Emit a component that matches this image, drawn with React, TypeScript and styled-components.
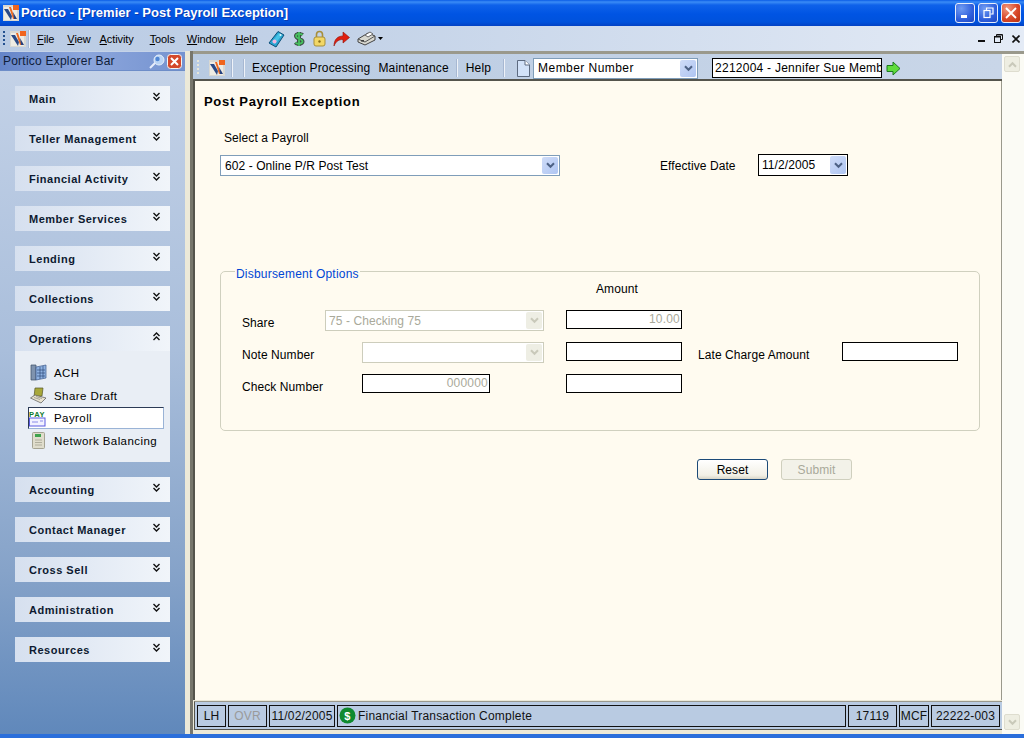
import React from "react";
import styled, { createGlobalStyle } from "styled-components";

const Global = createGlobalStyle`
  html, body { margin: 0; padding: 0; background: #2a6edb; }
  #root { width: 1024px; height: 738px; overflow: hidden; }
  * { box-sizing: border-box; }
`;

const Win = styled.div`
  width: 1024px; height: 738px; display: flex; flex-direction: column; overflow: hidden;
  font-family: "Liberation Sans", Arial, sans-serif; font-size: 12px; color: #000;
  background: #2a6edb;
`;
const TitleBar = styled.div`
  height: 26px; flex: none; display: flex; align-items: center; padding: 0 3px 0 3px;
  background: linear-gradient(#0a5ce6 0, #3b8cf6 2px, #0f62ea 5px, #0054e3 14px, #0052dc 22px, #0342c4 26px);
`;
const TitleText = styled.div`
  margin-left: 2px; color: #fff; font-weight: 700; font-size: 13px; letter-spacing: .03px; flex: 1;
  text-shadow: 1px 1px 0 #0a3bb0; line-height: 26px;
`;
const WinButtons = styled.div`display: flex; gap: 3px;`;
const WinBtn = styled.div<{ $red?: boolean }>`
  height: 20px; width: 20px; border: 1px solid #e8eefb; border-radius: 3px;
  display: flex; align-items: center; justify-content: center;
  background: ${(p) => (p.$red
    ? "radial-gradient(circle at 30% 25%, #f09a80, #d9482a 55%, #b8300f)"
    : "radial-gradient(circle at 30% 25%, #6f9bf2, #2f5fdc 60%, #1f47c0)")};
`;

const MenuBar = styled.div`
  height: 25px; flex: none; display: flex; align-items: center; padding: 0 4px 0 3px;
  background: linear-gradient(90deg, #b9cbe4 0, #c4d3e8 35%, #e4ebf6 100%);
`;
const Grip = styled.div<{ $light?: boolean; $r: number }>`
  width: 2px; height: 16px; flex: none; margin-right: ${(p) => p.$r}px;
  background: repeating-linear-gradient(${(p) => (p.$light ? "#e8e6d8" : "#23508f")} 0 2px, transparent 2px 4px);
`;
const MenuItem = styled.span<{ $r: number }>`
  font-size: 11px; letter-spacing: -.1px; margin-right: ${(p) => p.$r}px;
  &::first-letter { text-decoration: underline; }
`;
const Sep = styled.div<{ $l?: number; $r?: number }>`
  width: 1px; height: 18px; flex: none; background: #eef2f8; box-shadow: -1px 0 0 #a7b8d2;
  margin-left: ${(p) => p.$l ?? 0}px; margin-right: ${(p) => p.$r ?? 0}px;
`;
const MenuIcons = styled.div`display: flex; align-items: center; gap: 7px;`;
const MenuDrop = styled.span`display: flex; margin-left: -5px;`;
const MdiButtons = styled.div`margin-left: auto; display: flex; align-items: center; gap: 9px;`;

const Body = styled.div`flex: 1; display: flex; min-height: 0;`;
const Side = styled.aside`
  width: 185px; flex: none; display: flex; flex-direction: column;
  background: linear-gradient(#c5d3e8 0, #a9bedb 300px, #86a3c9 520px, #6088bb 683px);
`;
const SideHead = styled.div`
  height: 19px; flex: none; display: flex; align-items: center; padding: 0 3px 0 3px; margin-top: 1px; gap: 2px;
  background: linear-gradient(90deg, #6484c8, #8ca6dc 45%, #7593d0);
  border-bottom: 1px solid #6d8dc8; font-size: 12px; letter-spacing: .22px; color: #10203a;
`;
const SideTitle = styled.span`flex: 1;`;
const SideScroll = styled.div`flex: 1; padding: 15px 15px 0; display: flex; flex-direction: column; gap: 15px;`;
const Group = styled.section``;
const GroupHead = styled.div`
  height: 25px; display: flex; align-items: center; justify-content: space-between; padding: 0 10px 0 14px;
  background: linear-gradient(90deg, #d6e0ef, #f1f5fa);
  font-size: 11px; font-weight: 700; letter-spacing: .52px; color: #0d1a30;
`;
const ChevWrap = styled.span`display: flex; margin-top: -4px;`;
const GroupBody = styled.div`
  height: 111px; background: #e9eef5; padding: 10px 6px 0 13px; display: flex; flex-direction: column;
`;
const GroupItem = styled.div<{ $active?: boolean }>`
  height: ${(p) => (p.$active ? "22px" : "23px")}; display: flex; align-items: center; flex: none;
  gap: ${(p) => (p.$active ? "8px" : "7px")}; font-size: 11.5px; letter-spacing: .42px;
  padding-left: ${(p) => (p.$active ? "0" : "2px")};
  ${(p) => p.$active && "background:#fff;border:1px solid #9ab3d6;border-top-color:#2c3a55;border-left-color:#2c3a55;"}
`;
const IconSlot = styled.span`width: 17px; flex: none; display: flex; justify-content: center; align-items: center;`;

const Splitter = styled.div`
  width: 8px; flex: none; background: #ece9d8;
  border-right: 3px solid #77766c;
`;
const Main = styled.main`
  flex: 1; display: flex; background: #ece9d8; min-width: 0; min-height: 0;
  border-top: 3px solid #9a998c;
`;
const MainCol = styled.div`width: 809px; flex: none; display: flex; flex-direction: column;`;
const ToolBar = styled.div`
  height: 27px; flex: none; display: flex; align-items: center; padding: 3px 0 0 4px;
  background: linear-gradient(90deg, #b9cbe2, #c3d2e6 60%, #c9d6e8);
  border-bottom: 2px solid #55544c; font-size: 12px; letter-spacing: .15px;
`;
const ToolLogo = styled.span`display: flex; margin-left: 8px;`;
const ToolText = styled.span<{ $l?: number }>`
  margin-left: ${(p) => p.$l ?? 0}px; white-space: nowrap;
`;
const MemberCombo = styled.div`
  width: 165px; height: 21px; margin-left: 3px; background: #fff; border: 1px solid #7f9db9;
  display: flex; align-items: center; justify-content: space-between; padding: 1px 1px 1px 4px; letter-spacing: .45px;
`;
const ArrowBtn = styled.span<{ $off?: boolean }>`
  width: 16px; align-self: stretch; flex: none; display: flex; align-items: center; justify-content: center;
  background: ${(p) => (p.$off ? "#eeeee4" : "linear-gradient(135deg, #cfdcf8, #afc5f2)")};
  border-radius: 2px;
`;
const MemberInput = styled.div`
  width: 170px; height: 20px; margin: 0 4px 0 14px; background: #fff; border: 1px solid #000;
  display: flex; align-items: center; padding-left: 2px; overflow: hidden; white-space: nowrap; letter-spacing: .25px;
`;
const Form = styled.div`
  flex: 1; background: #fffbf0; padding: 13px 0 0 9px; letter-spacing: .08px; font-size: 12px;
  border-left: 2px solid #55544c; border-right: 1px solid #9a998c; min-height: 0;
`;
const PageTitle = styled.h1`margin: 0; font-size: 13px; line-height: 15px; letter-spacing: .7px; font-weight: 700;`;
const FormInner = styled.div`display: flex; flex-direction: column; padding-left: 16px;`;
const TopRow = styled.div`display: flex; margin-top: 22px;`;
const PayrollCol = styled.div`width: 440px; display: flex; flex-direction: column;`;
const PayrollLabel = styled.div`margin-left: 4px; height: 14px; line-height: 14px; margin-bottom: 10px;`;
const Select = styled.div<{ $w: number; $off?: boolean; $h?: number }>`
  width: ${(p) => p.$w}px; height: ${(p) => p.$h ?? 21}px; flex: none; background: #fff;
  border: 1px solid ${(p) => (p.$off ? "#cdcdbc" : "#7f9db9")};
  display: flex; align-items: center; justify-content: space-between; padding: 1px 1px 1px 4px;
  color: ${(p) => (p.$off ? "#a9a99a" : "#000")};
`;
const DateCol = styled.div`display: flex; align-items: center; margin-top: 23px; height: 22px;`;
const DateLabel = styled.span`width: 98px; padding-top: 2px;`;
const DateBox = styled(Select)`border-color: #000; padding-left: 3px;`;
const Field = styled.fieldset`
  margin: 85px 0 0 0; width: 760px; height: 170px; border: 1px solid #d0d0bf; border-radius: 5px; padding: 0 0 0 21px;
`;
const Legend = styled.legend`
  margin-left: -7px; padding: 6px 1px 0; color: #0046d5; font-size: 12px; line-height: 14px; letter-spacing: .2px;
`;
const AmountHead = styled.div`margin: 1px 0 0 354px; line-height: 14px; height: 14px;`;
const Grid = styled.div`
  display: grid; margin-top: 14px; align-items: start;
  grid-template-columns: 83px 37px 182px 22px 116px 16px 144px 116px;
  grid-auto-rows: 32px;
`;
const Label = styled.div<{ $span?: number; $col?: number }>`
  grid-column: ${(p) => p.$col ?? 1} / span ${(p) => p.$span ?? 1}; padding-top: 6px; line-height: 14px;
`;
const Box = styled.div<{ $w: number; $col: number }>`
  grid-column: ${(p) => p.$col}; width: ${(p) => p.$w}px; height: 19px; background: #fff; border: 1px solid #000;
  color: #a9a99a; text-align: right; padding-right: 1px; line-height: 17px; letter-spacing: .2px;
`;
const GridSelect = styled(Select)<{ $col: string }>`grid-column: ${(p) => p.$col}; width: auto; padding-left: 3px;`;
const Buttons = styled.div`display: flex; gap: 13px; margin: 28px 0 0 477px;`;
const Button = styled.div<{ $off?: boolean }>`
  width: 71px; height: 21px; border-radius: 3px; display: flex; align-items: center; justify-content: center;
  border: 1px solid ${(p) => (p.$off ? "#cfcfbe" : "#1c4a78")};
  background: ${(p) => (p.$off ? "#f3f2e9" : "linear-gradient(#fff, #f2f0e6 80%, #d9d6c8)")};
  color: ${(p) => (p.$off ? "#a9a99a" : "#000")};
`;
const Status = styled.div`
  height: 29px; flex: none; display: flex; align-items: center; gap: 2px;
  background: #b9cbe2; padding: 0 2px; font-size: 12px; letter-spacing: .2px;
  border: 1px solid #55544c; border-top-color: #9a998c;
  margin: 1px 0 4px 1px; width: 809px;
`;
const Cell = styled.div<{ $w?: number; $off?: boolean; $fill?: boolean }>`
  height: 22px; border: 1px solid #111; display: flex; align-items: center; justify-content: center;
  width: ${(p) => (p.$w ? `${p.$w}px` : "auto")}; flex: ${(p) => (p.$fill ? 1 : "none")};
  color: ${(p) => (p.$off ? "#9a9a9a" : "#111")}; white-space: nowrap;
`;
const MsgCell = styled(Cell)`justify-content: flex-start; padding-left: 1px; gap: 2px;`;
const ScrollBar = styled.div`
  width: 16px; margin: 0 4px 0 2px; flex: none; display: flex; flex-direction: column;
  justify-content: space-between; padding: 2px 0 4px;
`;
const ScrollBtn = styled.div`
  height: 16px; background: #eeeee2; border: 1px solid #deddcf; border-radius: 2px; display: flex; align-items: center; justify-content: center;
`;
const ScrollTrack = styled.div`width: 22px; flex: none; background: #fbfbf5; display: flex; margin-left: 0;`;
const Foot = styled.div`height: 4px; flex: none; background: #2a6edb;`;

const Logo = ({ s = 16 }: { s?: number }) => (
  <svg width={s} height={s} viewBox="0 0 16 16">
    <rect x="0" y="0" width="16" height="16" fill="#d9d8d2" />
    <rect x="1" y="2" width="13" height="13" fill="#eeece4" />
    <rect x="10" y="0" width="6" height="5" fill="#f0651e" />
    <path d="M1 4 L5 4 L9 11 L8 15 Z" fill="#2a4a86" />
    <path d="M6 2 L8 2 L12 14 L10 14 Z" fill="#ee6a20" />
    <path d="M10 7 L14 14 L11 14 Z" fill="#24417f" />
  </svg>
);
const Chevs = ({ up }: { up?: boolean }) => (
  <svg width="7" height="9" viewBox="0 0 7 9" fill="none" stroke="#111" strokeWidth="1.4">
    {up ? (
      <path d="M.5 4L3.5 1L6.5 4M.5 8L3.5 5L6.5 8" />
    ) : (
      <path d="M.5 1L3.5 4L6.5 1M.5 5L3.5 8L6.5 5" />
    )}
  </svg>
);
const Caret = ({ off, up }: { off?: boolean; up?: boolean }) => (
  <svg width="9" height="7" viewBox="0 0 9 7" fill="none" stroke={off ? "#c9c9ba" : "#4d6185"} strokeWidth="2">
    <path d={up ? "M1 5.8L4.5 2.2L8 5.8" : "M1 1.2L4.5 4.8L8 1.2"} />
  </svg>
);
const TagIcon = () => (
  <svg width="17" height="18" viewBox="0 0 17 18">
    <path d="M10 1.5L16 5L8 17L1 13Z" fill="#2aa3cf" stroke="#0d4f78" />
    <path d="M11 3L14 5L7 14L4 12Z" fill="#49c4e6" />
    <circle cx="6.5" cy="11.5" r="2" fill="#f4b4dc" />
    <circle cx="12.5" cy="5" r="1" fill="#e8f4fa" />
  </svg>
);
const DollarIcon = () => (
  <svg width="14" height="18" viewBox="0 0 14 18" fill="none">
    <path d="M10.5 5C9 3.5 4 3.5 4 6C4 9 10.5 8.5 10.5 11.5C10.5 14 5 14.5 3.5 12.5M7 2V16" stroke="#3d4f46" strokeWidth="4" />
    <path d="M10.5 5C9 3.5 4 3.5 4 6C4 9 10.5 8.5 10.5 11.5C10.5 14 5 14.5 3.5 12.5M7 2V16" stroke="#46c060" strokeWidth="1.8" />
  </svg>
);
const LockIcon = () => (
  <svg width="13" height="17" viewBox="0 0 13 17">
    <path d="M3.5 8V4.5a3 3 0 0 1 6 0V8" fill="none" stroke="#a78f3a" strokeWidth="1.6" />
    <rect x="1" y="7" width="11" height="9" rx="2" fill="#f2d766" stroke="#a78f3a" />
    <circle cx="6.5" cy="11.5" r="1.2" fill="#8a6f1a" />
  </svg>
);
const RedArrow = () => (
  <svg width="17" height="16" viewBox="0 0 17 16">
    <path d="M1 15C1 8 5 5 10 5V1L16.5 6.5L10 12V8.5C6 8.5 3 10 1 15Z" fill="#e01f10" stroke="#8f1208" strokeWidth=".6" />
  </svg>
);
const PrinterIcon = () => (
  <svg width="19" height="15" viewBox="0 0 19 15">
    <path d="M1 8L11 2L18 5L18 9L8 14L1 11Z" fill="#d8d8d0" stroke="#444" />
    <path d="M8 4L13 1L16 3L11 6Z" fill="#fff" stroke="#666" />
    <path d="M1 8L8 11L18 5" fill="none" stroke="#555" />
    <rect x="4" y="9" width="3" height="1.6" fill="#444" />
  </svg>
);
const SmallDown = () => (
  <svg width="5" height="3" viewBox="0 0 5 3"><path d="M0 0H5L2.5 3Z" fill="#000" /></svg>
);
const MinGlyph = () => <svg width="7" height="9" viewBox="0 0 7 9"><rect x="0" y="6" width="7" height="2" fill="#111" /></svg>;
const RestoreGlyph = () => (
  <svg width="9" height="9" viewBox="0 0 9 9" fill="none" stroke="#111">
    <path d="M2.5 2.5V.5H8.5V5.5H6.5" /><rect x=".5" y="2.5" width="6" height="6" /><path d="M1 3H6M3 1H8" />
  </svg>
);
const XGlyph = () => <svg width="8" height="8" viewBox="0 0 8 8" stroke="#111" strokeWidth="1.6"><path d="M.5.5L7.5 7.5M7.5.5L.5 7.5" /></svg>;
const PinIcon = () => (
  <svg width="16" height="15" viewBox="0 0 16 15">
    <circle cx="10" cy="6" r="5" fill="#b9d4f5" stroke="#e8f0fb" />
    <circle cx="8.5" cy="5" r="2.2" fill="#4f86d4" />
    <path d="M6 9L1 14" stroke="#e8eefb" strokeWidth="2" />
  </svg>
);
const CloseIcon = () => (
  <svg width="15" height="15" viewBox="0 0 15 15">
    <rect x=".5" y=".5" width="14" height="14" rx="3" fill="#d4482a" stroke="#f4f4f4" />
    <path d="M4 4L11 11M11 4L4 11" stroke="#fff" strokeWidth="2" />
  </svg>
);
const AchIcon = () => (
  <svg width="17" height="17" viewBox="0 0 17 17">
    <path d="M1 1H6V16H1Z" fill="#7f93ae" stroke="#3e4d66" strokeWidth=".7" />
    <path d="M6 3L16 1V14L6 16Z" fill="#8fb2e2" stroke="#3e5a8a" strokeWidth=".7" />
    <path d="M7 6H15M7 9H15M7 12H15M10 3V15M13 2V14" stroke="#2f4a7a" strokeWidth=".7" />
  </svg>
);
const DraftIcon = () => (
  <svg width="17" height="17" viewBox="0 0 17 17">
    <path d="M5 1L13 1L12 9L4 10Z" fill="#a8a83a" stroke="#55552a" strokeWidth=".7" />
    <path d="M0.5 11L5 8L16 11L11 16Z" fill="#e8e2d0" stroke="#555" strokeWidth=".7" />
    <path d="M4 10.5L10 12.5M6 9.5L12 11.5" stroke="#8a8a7a" strokeWidth=".7" />
  </svg>
);
const PayIcon = () => (
  <svg width="17" height="17" viewBox="0 0 17 17">
    <text x="0" y="6.5" fontFamily="Liberation Sans, sans-serif" fontWeight="700" fontSize="7.5" fill="#0f7a2c" textLength="16">PAY</text>
    <rect x=".5" y="8" width="15.5" height="8" fill="#f2f2ff" stroke="#5a5ae0" />
    <path d="M3 12H9M11 11H14" stroke="#8a8ae8" />
  </svg>
);
const NetIcon = () => (
  <svg width="13" height="17" viewBox="0 0 13 17">
    <rect x=".5" y=".5" width="12" height="16" rx="1" fill="#e0ddcc" stroke="#a5a392" />
    <rect x="3" y="2" width="6" height="3" fill="#3fa34d" />
    <path d="M3 8H10M3 10.5H10M3 13H10" stroke="#b0ae9c" />
  </svg>
);
const GreenArrow = () => (
  <svg width="15" height="15" viewBox="0 0 15 15">
    <path d="M1 4.5H7V1L14 7.5L7 14V10.5H1Z" fill="#5fdc3c" stroke="#1d7a20" />
  </svg>
);
const DocIcon = () => (
  <svg width="13" height="17" viewBox="0 0 13 17">
    <path d="M.5.5H8L12.5 5V16.5H.5Z" fill="#d2e2f8" stroke="#5d6b80" />
    <path d="M8 .5V5H12.5" fill="#fff" stroke="#5d6b80" />
  </svg>
);
const StatusDollar = () => (
  <svg width="17" height="17" viewBox="0 0 17 17">
    <circle cx="8.5" cy="8.5" r="8" fill="#0f8a2e" />
    <text x="8.5" y="12.5" textAnchor="middle" fontFamily="Liberation Sans, sans-serif" fontWeight="700" fontSize="11" fill="#fff">$</text>
  </svg>
);

const menus: [string, number][] = [["File", 13], ["View", 9], ["Activity", 16], ["Tools", 12], ["Window", 10], ["Help", 10]];
const before = ["Main", "Teller Management", "Financial Activity", "Member Services", "Lending", "Collections"];
const after = ["Accounting", "Contact Manager", "Cross Sell", "Administration", "Resources"];

const GroupRow = ({ name }: { name: string }) => (
  <Group>
    <GroupHead>{name}<ChevWrap><Chevs /></ChevWrap></GroupHead>
  </Group>
);

export default function App() {
  return (
    <Win>
      <Global />
      <TitleBar>
        <Logo />
        <TitleText>Portico - [Premier - Post Payroll Exception]</TitleText>
        <WinButtons>
          <WinBtn><svg width="10" height="12" viewBox="0 0 10 12"><rect x="1" y="8" width="6" height="3" fill="#fff" /></svg></WinBtn>
          <WinBtn>
            <svg width="11" height="12" viewBox="0 0 11 12" fill="none" stroke="#fff" strokeWidth="1.2">
              <path d="M3.5 3V1H10V7H7.5" /><rect x="1" y="3.5" width="6" height="7" />
            </svg>
          </WinBtn>
          <WinBtn $red><svg width="12" height="12" viewBox="0 0 12 12" stroke="#fff" strokeWidth="1.8"><path d="M1 1L11 11M11 1L1 11" /></svg></WinBtn>
        </WinButtons>
      </TitleBar>
      <MenuBar>
        <Grip $r={5} />
        <Logo />
        <Sep $l={3} $r={7} />
        {menus.map(([m, r]) => <MenuItem key={m} $r={r}>{m}</MenuItem>)}
        <MenuIcons>
          <TagIcon /><DollarIcon /><LockIcon /><RedArrow /><PrinterIcon /><MenuDrop><SmallDown /></MenuDrop>
        </MenuIcons>
        <MdiButtons><MinGlyph /><RestoreGlyph /><XGlyph /></MdiButtons>
      </MenuBar>
      <Body>
        <Side>
          <SideHead>
            <SideTitle>Portico Explorer Bar</SideTitle>
            <PinIcon /><CloseIcon />
          </SideHead>
          <SideScroll>
            {before.map((n) => <GroupRow key={n} name={n} />)}
            <Group>
              <GroupHead>Operations<ChevWrap><Chevs up /></ChevWrap></GroupHead>
              <GroupBody>
                <GroupItem><IconSlot><AchIcon /></IconSlot>ACH</GroupItem>
                <GroupItem><IconSlot><DraftIcon /></IconSlot>Share Draft</GroupItem>
                <GroupItem $active><IconSlot><PayIcon /></IconSlot>Payroll</GroupItem>
                <GroupItem><IconSlot><NetIcon /></IconSlot>Network Balancing</GroupItem>
              </GroupBody>
            </Group>
            {after.map((n) => <GroupRow key={n} name={n} />)}
          </SideScroll>
        </Side>
        <Splitter />
        <Main>
          <MainCol>
            <ToolBar>
              <Grip $light $r={2} />
              <ToolLogo><Logo /></ToolLogo>
              <Sep $l={7} />
              <Sep $l={11} />
              <ToolText $l={7}>Exception Processing</ToolText>
              <ToolText $l={8}>Maintenance</ToolText>
              <Sep $l={8} />
              <ToolText $l={8}>Help</ToolText>
              <Sep $l={13} $r={12} />
              <DocIcon />
              <MemberCombo>Member Number<ArrowBtn><Caret /></ArrowBtn></MemberCombo>
              <MemberInput>2212004 - Jennifer Sue Memb</MemberInput>
              <GreenArrow />
            </ToolBar>
            <Form>
              <PageTitle>Post Payroll Exception</PageTitle>
              <FormInner>
                <TopRow>
                  <PayrollCol>
                    <PayrollLabel>Select a Payroll</PayrollLabel>
                    <Select $w={340}>602 - Online P/R Post Test<ArrowBtn><Caret /></ArrowBtn></Select>
                  </PayrollCol>
                  <DateCol>
                    <DateLabel>Effective Date</DateLabel>
                    <DateBox $w={90} $h={22}>11/2/2005<ArrowBtn><Caret /></ArrowBtn></DateBox>
                  </DateCol>
                </TopRow>
                <Field>
                  <Legend>Disbursement Options</Legend>
                  <AmountHead>Amount</AmountHead>
                  <Grid>
                    <Label>Share</Label>
                    <GridSelect $w={219} $off $col="2 / span 2">75 - Checking 75<ArrowBtn $off><Caret off /></ArrowBtn></GridSelect>
                    <Box $w={116} $col={5}>10.00</Box>
                    <Label $span={2}>Note Number</Label>
                    <GridSelect $w={182} $off $col="3"><span /><ArrowBtn $off><Caret off /></ArrowBtn></GridSelect>
                    <Box $w={116} $col={5} />
                    <Label $col={7}>Late Charge Amount</Label>
                    <Box $w={116} $col={8} />
                    <Label $span={2}>Check Number</Label>
                    <Box $w={128} $col={3}>000000</Box>
                    <Box $w={116} $col={5} />
                  </Grid>
                </Field>
                <Buttons>
                  <Button>Reset</Button>
                  <Button $off>Submit</Button>
                </Buttons>
              </FormInner>
            </Form>
            <Status>
              <Cell $w={29}>LH</Cell>
              <Cell $w={39} $off>OVR</Cell>
              <Cell $w={66}>11/02/2005</Cell>
              <MsgCell $fill><StatusDollar />Financial Transaction Complete</MsgCell>
              <Cell $w={49}>17119</Cell>
              <Cell $w={30}>MCF</Cell>
              <Cell $w={69}>22222-003</Cell>
            </Status>
          </MainCol>
          <ScrollTrack>
            <ScrollBar>
              <ScrollBtn><Caret off up /></ScrollBtn>
              <ScrollBtn><Caret off /></ScrollBtn>
            </ScrollBar>
          </ScrollTrack>
        </Main>
      </Body>
      <Foot />
    </Win>
  );
}
